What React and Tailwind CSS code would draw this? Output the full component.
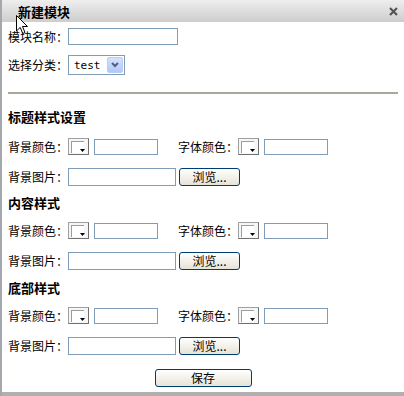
import React from 'react';

const FONT = { fontFamily: '"Noto Sans CJK SC", "Noto Sans", sans-serif' };

const ColorPick = () => (
  <div className="relative w-[21px] h-[17px] border border-[#a0a0a0] border-r-[#707070] border-b-[#707070] bg-[#f6f6f6]">
    <div className="absolute left-[2px] top-[2px] w-[13px] h-[12px] border-l border-t border-[#9c9c9c] bg-white" />
    <svg className="absolute right-[2px] bottom-[1px]" width="6" height="4" viewBox="0 0 6 4">
      <path d="M0 0 H5 L2.5 3 Z" fill="#000" />
    </svg>
  </div>
);

const TextBox = ({ w, h = 'h-[16px]' }) => (
  <div className={`${w} ${h} border border-[#7f9db9] bg-white`} />
);

const XpButton = ({ children, w }) => (
  <div className={`${w} h-[18px] rounded-[3px] border border-[#003c74] bg-gradient-to-b from-white to-[#e6e3d6] flex items-center justify-center text-[12px] leading-none text-black`}>
    {children}
  </div>
);

const StyleSection = ({ title, gaps }) => (
  <>
    <div className={`${gaps[0]} h-[16px] leading-[16px] text-[13px] font-bold text-black`}>{title}</div>
    <div className={`${gaps[1]} h-[17px] flex items-center text-[12px]`}>
      <span className="w-[60px]">背景颜色：</span>
      <ColorPick />
      <div className="ml-[5px]"><TextBox w="w-[64px]" /></div>
      <span className="ml-[20px] w-[60px]">字体颜色：</span>
      <ColorPick />
      <div className="ml-[5px]"><TextBox w="w-[64px]" /></div>
    </div>
    <div className={`${gaps[2]} h-[18px] flex items-center text-[12px]`}>
      <span className="w-[60px]">背景图片：</span>
      <TextBox w="w-[108px]" h="h-[18px]" />
      <div className="ml-[3px]"><XpButton w="w-[61px]">浏览...</XpButton></div>
    </div>
  </>
);

export default function App() {
  return (
    <div className="relative w-[404px] h-[396px] bg-[#b0b0b0] flex overflow-hidden" style={FONT}>
      <div className="w-[2px] h-full bg-[#a4a8ac]" />
      <div className="w-[402px] h-[392px] bg-white flex flex-col">
        <div className="h-[22px] bg-gradient-to-b from-[#eeeeee] to-[#cdcdcd] flex items-center justify-between pl-[16px] pr-[6px]">
          <span className="text-[13px] font-bold text-black leading-none">新建模块</span>
          <svg width="9" height="9" viewBox="0 0 9 9" className="mt-[1px]">
            <path d="M1 1 L8 8 M8 1 L1 8" stroke="#555" strokeWidth="2.2" />
          </svg>
        </div>
        <div className="flex flex-col pl-[6px] pr-[4px] text-black">
          <div className="mt-[6px] h-[17px] flex items-center text-[12px]">
            <span className="w-[60px]">模块名称：</span>
            <TextBox w="w-[110px]" h="h-[17px]" />
          </div>
          <div className="mt-[10px] h-[20px] flex items-center text-[12px]">
            <span className="w-[60px]">选择分类：</span>
            <div className="w-[57px] h-[20px] border border-[#7f9db9] bg-white flex items-center justify-between pl-[5px] pr-[1px]">
              <span className="text-[11px] leading-none" style={{ fontFamily: '"DejaVu Sans Mono", monospace' }}>test</span>
              <div className="w-[16px] h-[16px] rounded-[2px] bg-gradient-to-b from-[#d6e2fd] to-[#b3c8f6] border border-[#bacdf6] flex items-center justify-center">
                <svg width="8" height="6" viewBox="0 0 8 6">
                  <path d="M1 1 L4 4 L7 1" fill="none" stroke="#4d6185" strokeWidth="2" />
                </svg>
              </div>
            </div>
          </div>
          <div className="mt-[17px] mr-[2px] h-[2px] bg-[#aca899]" />
          <StyleSection title="标题样式设置" gaps={['mt-[15px]', 'mt-[13px]', 'mt-[13px]']} />
          <StyleSection title="内容样式" gaps={['mt-[9px]', 'mt-[11px]', 'mt-[13px]']} />
          <StyleSection title="底部样式" gaps={['mt-[10px]', 'mt-[11px]', 'mt-[13px]']} />
          <div className="mt-[14px] flex justify-center pr-[2px]">
            <XpButton w="w-[97px]">保存</XpButton>
          </div>
        </div>
      </div>
      <svg className="absolute left-[16px] top-[15px]" width="13" height="20" viewBox="0 0 13 20">
        <path d="M0.5 0.5 L0.5 16 L4.2 12.4 L6.8 18.5 L9 17.5 L6.5 11.5 L11.5 11.5 Z" fill="#fff" stroke="#000" strokeWidth="1" />
      </svg>
    </div>
  );
}
